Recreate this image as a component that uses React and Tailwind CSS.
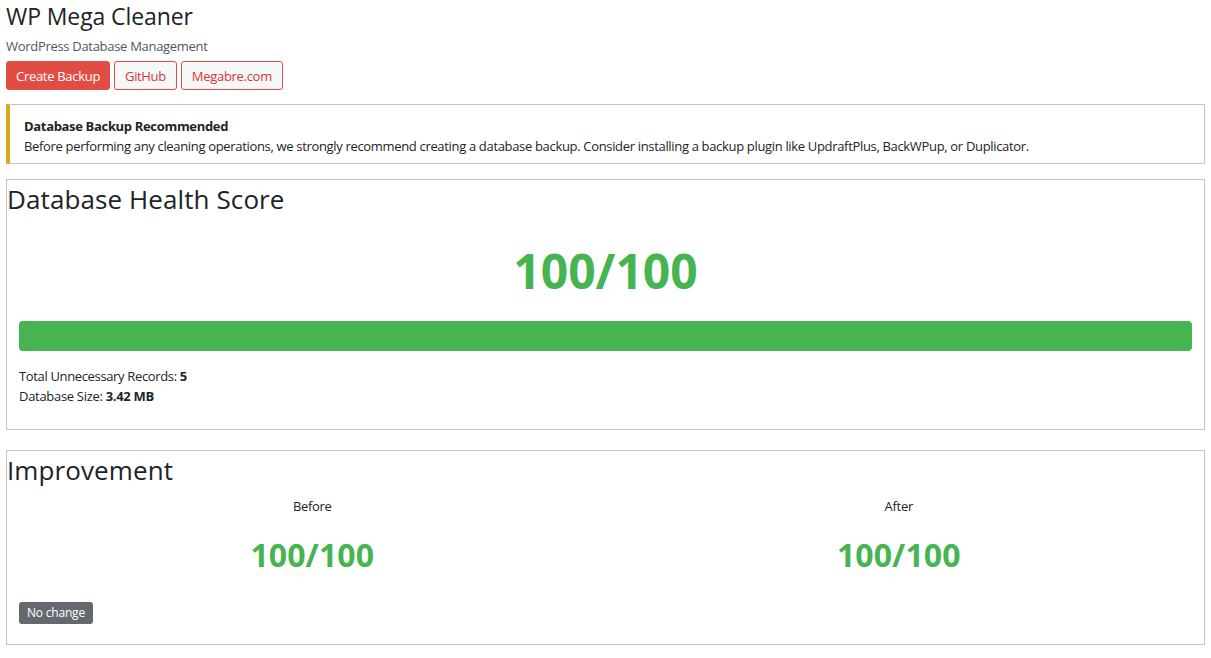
export default function App() {
  const font = { fontFamily: '"Open Sans", "Noto Sans", Arial, sans-serif' };
  return (
    <div className="bg-white min-h-[658px] w-[1211px] text-[#1d2327] px-[6px] pt-[1px]" style={font}>
      <h1 className="text-[23px] leading-[30px] font-normal m-0 tracking-[-0.1px]">WP Mega Cleaner</h1>
      <p className="text-[13px] leading-[20px] text-[#50575e] mt-[5px] tracking-[-0.3px]">WordPress Database Management</p>
      <div className="flex gap-[4px] mt-[5px]">
        <button className="h-[29px] px-[9px] pt-[2px] text-[13px] rounded-[3px] bg-[#e14d43] text-white border border-[#e14d43] tracking-[-0.3px]">Create Backup</button>
        <button className="h-[29px] px-[10px] pt-[2px] text-[13px] rounded-[3px] bg-[#f6f7f7] text-[#d63638] border border-[#e14d43] tracking-[-0.35px]">GitHub</button>
        <button className="h-[29px] px-[10px] pt-[2px] text-[13px] rounded-[3px] bg-[#f6f7f7] text-[#d63638] border border-[#e14d43] tracking-[-0.3px]">Megabre.com</button>
      </div>
      <div className="mt-[14px] border border-[#c3c4c7] border-l-4 border-l-[#dba617] pl-[14px] pt-[11px] pb-[7px] text-[13px] leading-[20px] tracking-[-0.33px]">
        <div className="font-bold">Database Backup Recommended</div>
        <div>Before performing any cleaning operations, we strongly recommend creating a database backup. Consider installing a backup plugin like UpdraftPlus, BackWPup, or Duplicator.</div>
      </div>
      <div className="mt-[15px] border border-[#c3c4c7] h-[251px]">
        <h2 className="text-[26px] leading-[38px] font-normal tracking-[0.1px]">Database Health Score</h2>
        <div className="px-[12px]">
          <div className="text-center text-[#46b450] font-bold text-[48px] leading-[66px] mt-[20px] tracking-[0px]">100/100</div>
          <div className="mt-[17px] h-[30px] rounded-[4px] bg-[#46b450]"></div>
          <div className="mt-[15px] text-[13px] leading-[20px] tracking-[-0.35px]">Total Unnecessary Records: <strong>5</strong></div>
          <div className="text-[13px] leading-[20px] tracking-[-0.3px]">Database Size: <strong>3.42 MB</strong></div>
        </div>
      </div>
      <div className="mt-[20px] border border-[#c3c4c7] h-[195px]">
        <h2 className="text-[26px] leading-[38px] font-normal tracking-[0.1px]">Improvement</h2>
        <div className="px-[12px]">
          <div className="grid grid-cols-2">
            <div className="text-center">
              <div className="text-[13px] leading-[20px] mt-[7px] tracking-[-0.3px]">Before</div>
              <div className="text-[32px] leading-[44px] font-bold text-[#46b450] mt-[17px] tracking-[0.1px]">100/100</div>
            </div>
            <div className="text-center">
              <div className="text-[13px] leading-[20px] mt-[7px] tracking-[-0.3px]">After</div>
              <div className="text-[32px] leading-[44px] font-bold text-[#46b450] mt-[17px] tracking-[0.1px]">100/100</div>
            </div>
          </div>
          <span className="inline-block mt-[25px] bg-[#646970] text-white text-[12px] leading-[22px] px-[8px] rounded-[3px] tracking-[-0.2px]">No change</span>
        </div>
      </div>
    </div>
  );
}
